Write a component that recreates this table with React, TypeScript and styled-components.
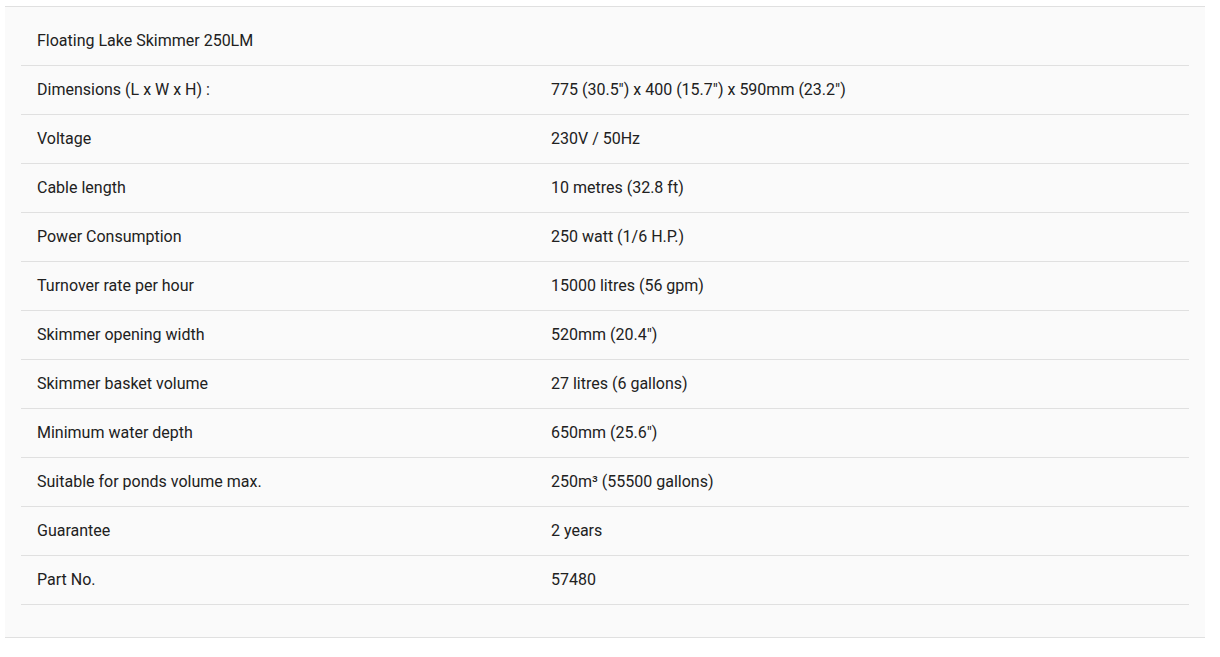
import styled, { createGlobalStyle } from "styled-components";

const specs: [string, string][] = [
	["Dimensions (L x W x H) :", "775 (30.5\") x 400 (15.7\") x 590mm (23.2\")"],
	["Voltage", "230V / 50Hz"],
	["Cable length", "10 metres (32.8 ft)"],
	["Power Consumption", "250 watt (1/6 H.P.)"],
	["Turnover rate per hour", "15000 litres (56 gpm)"],
	["Skimmer opening width", "520mm (20.4\")"],
	["Skimmer basket volume", "27 litres (6 gallons)"],
	["Minimum water depth", "650mm (25.6\")"],
	["Suitable for ponds volume max.", "250m³ (55500 gallons)"],
	["Guarantee", "2 years"],
	["Part No.", "57480"],
];

export default function App() {
	return (
		<>
			<GlobalStyle />
			<Panel>
				<SpecTable>
					<Row>
						<Cell>Floating Lake Skimmer 250LM</Cell>
					</Row>
					{specs.map(([label, value]) => (
						<Row key={label}>
							<Cell>{label}</Cell>
							<Cell>{value}</Cell>
						</Row>
					))}
				</SpecTable>
			</Panel>
		</>
	);
}

const GlobalStyle = createGlobalStyle`
	body {
		margin: 0;
		background: #ffffff;
		font-family: Roboto, "Liberation Sans", sans-serif;
	}
`;

const Panel = styled.section`
	width: 1200px;
	margin: 6px 5px 0;
	box-sizing: border-box;
	background: #fafafa;
	border-top: 1px solid #e0e0e0;
	border-bottom: 1px solid #e0e0e0;
	padding: 10px 16px 32px;
`;

const SpecTable = styled.div`
	display: flex;
	flex-direction: column;
`;

const Row = styled.div`
	display: grid;
	grid-template-columns: 514px 1fr;
	height: 49px;
	box-sizing: border-box;
	border-bottom: 1px solid #e0e0e0;
	align-items: center;
`;

const Cell = styled.div`
	padding: 0 16px;
	font-size: 16px;
	color: #212121;
	line-height: 20px;
`;
